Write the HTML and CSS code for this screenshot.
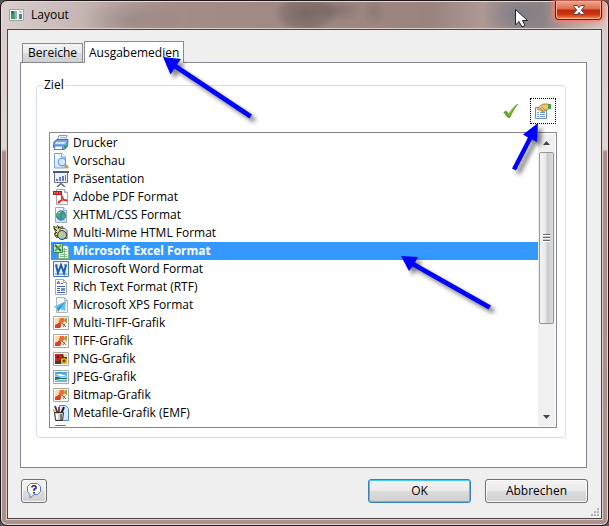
FILE: index.html
```html
<!DOCTYPE html>
<html lang="de">
<head>
<meta charset="utf-8">
<title>Layout</title>
<link rel="stylesheet" href="styles.css">
</head>
<body>
<svg class="defs" aria-hidden="true">
  <defs>
    <linearGradient id="sky" x2="0" y2="1"><stop stop-color="#3aa0dc"/><stop offset="1" stop-color="#e8f6fc"/></linearGradient>
    <linearGradient id="sheet" x2="1" y2="1"><stop stop-color="#fff"/><stop offset="1" stop-color="#b9d2f5"/></linearGradient>
    <symbol id="art" viewBox="0 0 16 16"><path fill="#fff" stroke="#a6a6a6" d="M.5 1.500h15v13H.5z"/><path fill="#f6dfa6" d="M2 3h12v10H2z"/><path fill="#ee6a38" d="M7 3h4l1 3-4 3H5z"/><path fill="#dd3d22" d="M2 10l4-2 3 1-2 4H2z"/><path fill="#8cab46" d="M12 3h2v5l-2-1z"/><path fill="#f5f5ee" d="M8 9l2-1 4 1v4H8z"/><path stroke="#916447" fill="none" d="M9 8l4 4m-3 0l2-3"/></symbol>
    <symbol id="page" viewBox="0 0 16 16"><path fill="url(#sheet)" stroke="#9cabc2" d="M2.500.5h8l3 3v12h-11z"/><path fill="#e4ebf5" stroke="#9cabc2" d="M10.500.5v3h3"/></symbol>
  </defs>
</svg>
<main class="window">
  <header class="titlebar">
    <svg class="app-icon" viewBox="0 0 15 12"><path fill="#f4f6f6" stroke="#9aa5aa" d="M.5.5h14v11H.5z"/><path fill="#2b6e9c" d="M2 2h5v4H2z"/><path fill="#3c9b62" d="M2 5h5v5H2z"/><path fill="#86bb9d" d="M5 2h3v8H6z"/><path fill="#bccbd0" d="M10 2h3v2h-3z"/><path fill="#5b7890" d="M10 5h3v5h-3z"/></svg>
    <h1>Layout</h1>
    <button class="close" type="button" aria-label="Schließen"><svg viewBox="0 0 12 10"><path fill="#fff" stroke="#5d3b3b" d="M.8.5h3.400L6 2.700 7.800.5h3.400v1.300L8.300 5l2.900 3.200v1.300H7.800L6 7.300 4.200 9.500H.8V8.200L3.700 5 .8 1.800z"/></svg></button>
  </header>
  <section class="client">
    <nav class="tabs" role="tablist">
      <button class="tab" type="button" role="tab">Bereiche</button>
      <button class="tab active" type="button" role="tab" aria-selected="true">Ausgabemedien</button>
    </nav>
    <div class="panel" role="tabpanel">
      <fieldset class="group">
        <legend>Ziel</legend>
        <div class="tools">
          <button class="tool" type="button" aria-label="Übernehmen"><svg viewBox="0 0 16 16"><path fill="#62a51c" stroke="#4b8510" stroke-width=".6" d="M.8 9.200l2.300-1.100 2.500 3.100C8 7 11 3.500 15 1c-3 3.500-5.800 8-8.200 13.500H5z"/><path fill="none" stroke="#9fd252" d="M6 12.200C8 8 10 5 12.500 3"/></svg></button>
          <button class="tool focused" type="button" aria-label="Eigenschaften"><svg viewBox="0 0 16 16"><path fill="#eef6fd" stroke="#6890b6" d="M.5 4.500h11v11H.5z"/><path stroke="#76a4cc" d="M2 9.500h2m1 0h5M2 11.500h2m1 0h5M2 13.500h2m1 0h5"/><path fill="#efc36b" stroke="#8e682b" stroke-width=".7" d="M2.500 6l3-3.500 3-1.500h5v5l-3 1.500-2 .5 1 1-1 .8-3.500-3L3 7z"/><path stroke="#9c7130" stroke-width=".7" d="M5 5l3 3m-1-4l3 3"/><path fill="#43a047" d="M13 1h3v5h-3z"/></svg></button>
        </div>
        <div class="listbox">
          <ul class="items" role="listbox" aria-label="Ziel">
            <li role="option"><svg viewBox="0 0 16 16"><path fill="#eff6ff" stroke="#6f9de0" d="M6 .5h8L12 6H4z"/><path stroke="#90b4e8" d="M7 2.500h5M6 4.500h5"/><path fill="#78a7ef" stroke="#3269c6" d="M1 7l3-2.500h11L14.500 11l-3 3.500H3L.5 12z"/><path fill="#d5e5ff" d="M3 7h10l-2 2H2z"/><path fill="#fff" stroke="#4d80d1" d="M2 11h8l-1 3.500H1z"/><path fill="#20b548" d="M11 10h3v3h-3z"/></svg>Drucker</li>
            <li role="option"><svg viewBox="0 0 16 16"><path fill="url(#sheet)" stroke="#78a1e6" d="M1.500.5h7l4 3.500v11h-11z"/><path fill="#fff" stroke="#78a1e6" d="M8.500.5V4h4"/><circle cx="9" cy="9" r="3.800" fill="#d5eaff" stroke="#5a8fe0"/><path stroke="#c89a3b" stroke-width="2.500" d="M12 12l3 3"/></svg>Vorschau</li>
            <li role="option"><svg viewBox="0 0 16 16"><path fill="#edf2ff" stroke="#69717c" d="M1.500 1.500h13v10h-13z"/><path stroke="#555c66" stroke-width="2" d="M0 1h16"/><path fill="#6577cb" d="M3 8h2v2H3zm3-2h2v4H6zm3-1h2v5H9zm3-1h1v6h-1z"/><path fill="none" stroke="#60646b" stroke-width="1.400" d="M8 11v2m-4 3l4-3.500 4 3.500"/></svg>Präsentation</li>
            <li role="option"><svg viewBox="0 0 16 16"><path fill="#fff" stroke="#aaa" d="M3.500.5h8l3 3v12h-11z"/><path fill="#ddd" stroke="#aaa" d="M11.500.5v3h3"/><path fill="#b71717" d="M0 2h9v4H0z"/><path stroke="#fff" stroke-width=".8" stroke-dasharray="1.500 1" d="M1 4h7"/><path fill="none" stroke="#e42a27" stroke-width="1.300" d="M8.500 6c1 4-1 7-3 8-2-1 3-3.500 8-3 2 1-3 2-4.500-4"/></svg>Adobe PDF Format</li>
            <li role="option"><svg viewBox="0 0 16 16"><use href="#page"/><circle cx="8" cy="8.500" r="4.700" fill="#348bd0" stroke="#276ba8" stroke-width=".7"/><path fill="#55b24b" d="M5 5l4-1-1 3-2 1 1 3-2-1-2-2zm5 2l2.500 1-1 3-2 1-1-3z"/><path stroke="#c4e9ff" d="M5 6l2-1"/></svg>XHTML/CSS Format</li>
            <li role="option"><svg viewBox="0 0 16 16"><path fill="#f1e850" stroke="#414114" d="M.5 1.500l3 1 1-2 2 2 3-1 1 3 2 2-2 3-7 3-2-3 1-3z"/><path fill="#e9edf2" stroke="#52585c" d="M7 3.500h5l2 2v8H7z"/><circle cx="9" cy="10" r="4.500" fill="#8fc3df" stroke="#243d52"/><path fill="#d9cf56" d="M6 8l3-2 1 3-2 1 1 3-3-2zm5 1l2 1-1 2-2 1z"/><path fill="none" stroke="#222" d="M1 3l3 3M2 9l2-2m2-6L5 4m-3 6l2 1"/></svg>Multi-Mime HTML Format</li>
            <li role="option" class="selected" aria-selected="true"><svg viewBox="0 0 16 16"><path fill="#f4fcf4" stroke="#7dac86" d="M5.500 2.500h8l2 2v11h-10z"/><path stroke="#86bb8d" d="M10 6.500h4m-4 2h4m-7 3h7m-7 2h7M11.500 5v10"/><path fill="#c8e6c8" stroke="#398443" d="M.5.500h9v9h-9z"/><path stroke="#217a31" stroke-width="2" d="M2 2l6 6"/><path stroke="#58a35f" stroke-width="1.800" d="M8 2L2 8"/></svg>Microsoft Excel Format</li>
            <li role="option"><svg viewBox="0 0 16 16"><path fill="#e9f3ff" stroke="#4679bb" d="M.5.500h15v15H.5z"/><path fill="#8db9eb" d="M2 12h12v2H2z"/><path fill="none" stroke="#205aa8" stroke-width="2" d="M3 4l2 8L8 4l3 8 2-8"/><path stroke="#205aa8" d="M2 4h3m2 0h2m2 0h3"/></svg>Microsoft Word Format</li>
            <li role="option"><svg viewBox="0 0 16 16"><path fill="#fff" stroke="#a4a9b0" d="M2.500.5h8l3 3v12h-11z"/><path fill="none" stroke="#a4a9b0" d="M10.500.5v3h3"/><path fill="none" stroke="#4263ab" d="M4 5l1.500-3L7 5M4.500 4h2M8 4.500h2M4 7.500h8M4 9.500h3M4 11.500h3M4 13.500h8"/><path fill="#6c8fc8" d="M8 9h4v3H8z"/></svg>Rich Text Format (RTF)</li>
            <li role="option"><svg viewBox="0 0 16 16"><path fill="#f4f7fa" stroke="#b0b4bb" d="M3.500.5h8l3 3v12h-11z"/><path fill="none" stroke="#b0b4bb" d="M11.500.5v3h3"/><path fill="#6cc4ea" d="M0 10L13 4l-1 10-5-2-2 3-1-4z"/><path fill="#2e9bd0" d="M4 11l9-7-6 8-2 3z"/></svg>Microsoft XPS Format</li>
            <li role="option"><svg><use href="#art"/></svg>Multi-TIFF-Grafik</li>
            <li role="option"><svg><use href="#art"/></svg>TIFF-Grafik</li>
            <li role="option"><svg viewBox="0 0 16 16"><path fill="#fff" stroke="#a6a6a6" d="M.5 1.500h15v13H.5z"/><path fill="#3f4222" d="M2 3h12v10H2z"/><path fill="#ce241d" d="M2 3h6l1 4-3 3H2z"/><circle cx="5" cy="6" r="1.300" fill="#6d1111"/><path fill="#e9b119" d="M8 8l3-1 3 1v5H8z"/><circle cx="11" cy="10" r="1.400" fill="#694100"/><path fill="#e9d8b0" d="M10 3h4v3h-3z"/></svg>PNG-Grafik</li>
            <li role="option"><svg viewBox="0 0 16 16"><path fill="#fff" stroke="#a6a6a6" d="M.5 1.500h15v13H.5z"/><path fill="url(#sky)" d="M2 3h12v10H2z"/><path fill="#266e61" d="M2 8l3 0 3 1h6v1H7l-5 1z"/><path fill="#70b4d5" d="M2 12l5-1h7v2H2z"/><path stroke="#f3fbff" d="M4 5.500h5m-3 1h6"/></svg>JPEG-Grafik</li>
            <li role="option"><svg><use href="#art"/></svg>Bitmap-Grafik</li>
            <li role="option"><svg viewBox="0 0 16 16"><path fill="#d5e9ff" stroke="#4f87d1" d="M6.500.5h6l3 3v12h-9z"/><path stroke="#243f91" stroke-width="2" d="M2 1l3 8"/><path stroke="#d92922" stroke-width="2" d="M6 2v7"/><path stroke="#222" stroke-width="2" d="M11 2L8 9"/><path stroke="#e8b320" stroke-width="2" d="M0 4l3 5"/><path fill="#d0d2d4" stroke="#333" d="M1.500 7.500h9l-1 8h-7z"/><path stroke="#fff" stroke-width="2" d="M4 9v5"/><path stroke="#777" stroke-width="2" d="M8 9v6"/></svg>Metafile-Grafik (EMF)</li>
            <li role="option"><svg viewBox="0 0 16 16"><path fill="#eef4ff" stroke="#4173e1" d="M2.500 2.500h10v13h-10z"/></svg></li>
          </ul>
          <div class="scrollbar" aria-hidden="true">
            <svg class="up" viewBox="0 0 7 4"><path fill="#444" d="M3.500 0L7 4H0z"/></svg>
            <div class="track"><div class="thumb"><i></i></div></div>
            <svg class="down" viewBox="0 0 7 4"><path fill="#444" d="M3.500 4L7 0H0z"/></svg>
          </div>
        </div>
      </fieldset>
    </div>
    <footer class="actions">
      <button class="push help" type="button" aria-label="Hilfe"><svg viewBox="0 0 14 16"><path fill="#fffce0" stroke="#4b7de8" d="M3.500.5h7l3 3v5l-3 3H7l-4 3.500v-3.500l-2.500-3v-5z"/><path fill="none" stroke="#3926a8" stroke-width="1.600" d="M5 4.500V3.800l1-1h2l1 1V5L7 6.500V8"/><path fill="#3926a8" d="M6 9h2v1.500H6z"/></svg></button>
      <button class="push default" type="button">OK</button>
      <button class="push" type="button">Abbrechen</button>
    </footer>
    <svg class="grip" viewBox="0 0 8 8"><path fill="#b4b4b4" d="M6 0h2v2H6zM3 3h2v2H3zm3 0h2v2H6zM0 6h2v2H0zm3 0h2v2H3zm3 0h2v2H6z"/></svg>
  </section>
  <svg class="overlay" viewBox="0 0 609 526" aria-hidden="true">
    <g class="arrows">
      <path d="M163 57l18 2-4 5.500 75 50-2.500 4-75-50-4 6z"/>
      <path d="M538 123l-1 19-5-2.500-16 31-4-2 16-31-5-3z"/>
      <path d="M401 256l17 1-3 5.500 76 43-2.500 4-76-43-3.500 4.500z"/>
    </g>
    <path class="cursor" d="M515.500 9.500v15.500l3.500-3.500 3 5.500 3-1.500-2.500-5h5z"/>
  </svg>
</main>
</body>
</html>
```
FILE: styles.css
```css
* { box-sizing: border-box; }
body { margin: 0; background: #555; font: 12px/16px "Segoe UI", "Open Sans", "Noto Sans", sans-serif; color: #000; }
button { margin: 0; font: inherit; color: inherit; }
svg { display: block; flex: none; }
.defs { position: absolute; width: 0; height: 0; }

.window {
  position: relative;
  display: flex;
  flex-direction: column;
  min-height: 100vh;
  padding: 0 6px 6px;
  border: 1px solid #1e1719;
  border-radius: 7px;
  box-shadow: inset 0 0 0 1px #e4d8d6;
  background: linear-gradient(#d6cbc9, #dfd5d2 148px, #a98e8a 151px, #ab918d);
}
.window::before {
  content: "";
  position: absolute;
  inset: 1px 1px auto;
  height: 27px;
  border-radius: 5px 5px 0 0;
  background:
    radial-gradient(ellipse 50px 22px at 130px 18px, #75615f55, transparent),
    radial-gradient(ellipse 32px 20px at 304px 11px, #5f514f99, #5f514f55 70%, transparent),
    radial-gradient(ellipse 28px 12px at 334px 8px, #5f514f66, transparent),
    radial-gradient(ellipse 12px 14px at 372px 10px, #65585544, transparent),
    radial-gradient(ellipse 35px 22px at 515px 12px, #737785aa, transparent),
    linear-gradient(90deg, #d9cfcd, #c4b5b3 80px, #a58d87 170px, #9b847e 430px, #ad9894 480px, #8e8384 540px, #ddc9c5);
}

.titlebar { position: relative; display: flex; align-items: center; height: 28px; padding: 0 0 0 2px; gap: 7px; }
.app-icon { width: 15px; height: 12px; }
h1 { flex: 1; margin: 0; font-size: 12px; font-weight: 400; line-height: 16px; }
.close {
  display: grid;
  place-items: center;
  align-self: flex-start;
  width: 47px;
  height: 19px;
  padding: 0;
  border: 1px solid #551d16;
  border-top: 0;
  border-radius: 0 0 4px 4px;
  background: linear-gradient(#efa58f, #dd6b4b 45%, #bb260b 50%, #cf3712 75%, #ff8b38);
  box-shadow: inset 0 0 0 1px #f6b49a, 0 0 5px 2px #ff7864;
}
.close svg { width: 12px; height: 10px; }

.client {
  position: relative;
  flex: 1;
  display: flex;
  flex-direction: column;
  padding: 11px 14px 15px 12px;
  border: 1px solid #4d4143;
  background: #efefef;
  box-shadow: 0 0 0 1px #dfd0cd;
}
.tabs { display: flex; align-items: flex-end; gap: 1px; padding-left: 2px; }
.tab {
  height: 19px;
  padding: 0 5px;
  border: 1px solid #898c95;
  border-bottom: 0;
  background: linear-gradient(#f3f3f3, #ebebeb 48%, #dcdcdc 50%, #d0d0d0);
}
.tab.active { position: relative; height: 22px; padding: 0 4px; margin-bottom: -1px; background: #fff; }
.panel { flex: 1; display: flex; padding: 14px 20px 29px 15px; border: 1px solid #85878f; background: #fff; }

.group { flex: 1; min-width: 0; display: flex; flex-direction: column; margin: 0; padding: 5px 8px 9px 12px; border: 1px solid #d5e1e8; border-radius: 4px; }
.group legend { margin-left: -6px; padding: 0 1px; }
.tools { display: flex; justify-content: flex-end; gap: 6px; height: 26px; padding-right: 1px; }
.tool { display: grid; place-items: center; width: 26px; height: 26px; padding: 0; border: 0; background: none; }
.tool.focused { border: 1px dotted #000; }
.tool svg { width: 16px; height: 16px; }

.listbox { flex: 1 0 296px; display: flex; margin-top: 8px; padding: 1px; border: 1px solid #828790; }
.items { flex: 1; height: 292px; margin: 0; padding: 0; overflow: hidden; list-style: none; }
.items li { display: flex; align-items: center; gap: 4px; height: 18px; padding-left: 2px; }
.items svg { width: 16px; height: 16px; }
.items .selected { background: #3399ff; color: #fff; font-weight: 700; }
.scrollbar { display: flex; flex-direction: column; align-items: center; width: 17px; padding: 7px 1px; background: #f0f0f0; }
.up, .down { width: 7px; height: 4px; }
.track { flex: 1; width: 100%; padding: 7px 0; }
.thumb { display: grid; place-items: center; height: 67%; border: 1px solid #979797; border-radius: 2px; background: linear-gradient(90deg, #f6f6f6, #e7e7e9 45%, #c9cacd 55%, #dcdcde); }
.thumb i { width: 7px; height: 8px; background: repeating-linear-gradient(#66686d 0 1px, #fff 1px 2px, #c9cacd 2px 3px); }

.actions { display: flex; gap: 14px; margin: 11px -1px 0 0; }
.push {
  display: grid;
  place-items: center;
  width: 103px;
  height: 24px;
  padding: 0;
  border: 1px solid #707070;
  border-radius: 3px;
  background: linear-gradient(#f3f3f3, #ebebeb 48%, #dddddd 50%, #cfcfcf);
  box-shadow: inset 0 0 0 1px #fbfbfb;
}
.push.help { width: 26px; margin: 0 auto 0 1px; }
.help svg { width: 14px; height: 16px; }
.push.default { border-color: #3c7fb1; box-shadow: inset 0 0 0 1px #43c9f0; }
.grip { position: absolute; right: 2px; bottom: 2px; width: 8px; height: 8px; }

.overlay { position: absolute; top: -1px; left: -1px; width: 609px; height: 526px; pointer-events: none; }
.arrows { fill: #0000ff; filter: drop-shadow(4px 4px 2px #00000080); }
.cursor { fill: #fff; stroke: #222433; }
```
